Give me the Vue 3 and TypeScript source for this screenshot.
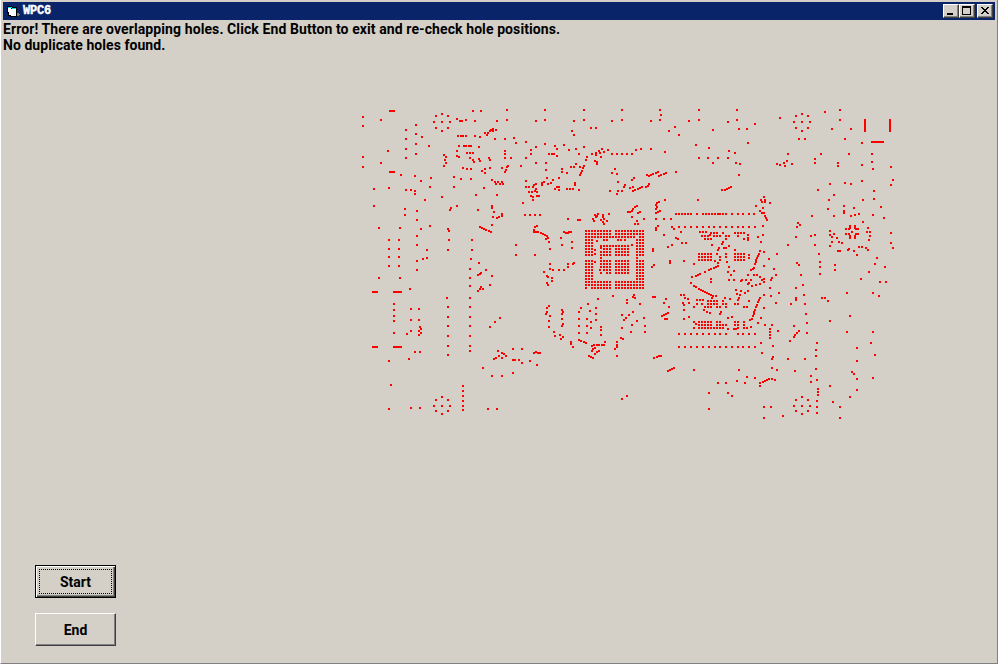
<script setup lang="ts">
interface Sheet {
  x: number
  y: number
  holes: string
}

// Hole centres, in thirds of a pixel from each sheet's origin.
const sheets: Sheet[] = [
  {
    x: 350, y: 100,
    holes: `39,51 39,78 93,60 120,33 126,33 132,33 369,33 393,33 276,42 258,48 294,48 252,66 276,66 300,66 258,84 294,84 276,93
    321,57 330,63 336,63 348,60 375,63 198,75 198,102 216,111 168,90 168,117 168,147 168,174 198,132 198,162 237,138 114,153
    39,171 39,201 93,189 120,216 126,216 132,216 153,225 195,228 213,243 243,234 240,261 168,270 183,270 195,273 195,282
    117,264 72,267 72,318 225,300 276,291 165,327 165,345 201,333 201,360 240,378 213,387 87,384 150,384 117,420 147,420
    117,447 147,447 117,471 147,471 201,408 201,435 231,450 231,474 219,477 324,108 333,108 339,108 348,108 375,108 390,111
    405,99 414,99 411,105 420,93 327,138 342,138 348,138 357,138 363,138 387,141 321,153 351,159 360,159 369,159 282,165
    288,171 321,168 327,171 285,180 288,189 282,198 360,174 369,180 372,186 387,177 390,183 417,174 420,180 339,204 351,207
    363,207 396,213 405,207 405,219 420,204 312,231 333,237 363,237 312,261 402,264 378,285 303,324 300,330 321,318 384,330
    294,387 297,393 390,381 396,384 402,387 408,390 417,393 297,420 366,420 294,450 366,450 363,477`,
  },
  {
    x: 490, y: 100,
    holes: `51,30 165,30 282,30 396,30 51,60 165,60 282,60 396,60 21,63 138,63 252,63 366,63 303,84 318,84 246,93 252,105
    3,90 9,87 9,93 18,90 15,117 45,117 72,114 78,129 108,126 165,132 138,141 195,138 222,135 201,147 237,150 258,147 282,141
    45,153 45,162 45,174 63,174 123,150 123,162 108,174 177,162 186,162 192,162 201,168 267,162 291,171 288,180 306,162
    318,159 318,165 327,153 330,159 336,147 342,156 354,150 333,171 366,162 381,162 396,162 411,162 315,183 321,186 321,192
    0,180 0,204 36,204 54,198 51,201 48,210 45,216 93,198 138,189 168,189 168,210 216,207 216,216 231,219 243,201 252,201
    258,192 270,201 282,198 279,204 276,213 273,219 270,225 375,207 366,219 381,222 6,240 15,246 24,246 36,246 18,252 30,252
    39,252 108,243 171,234 189,240 207,234 162,246 156,249 156,255 174,252 183,249 138,252 132,255 129,261 108,261 117,261
    138,267 135,273 126,276 117,276 141,276 123,288 129,291 141,288 147,288 129,300 195,267 201,261 207,261 207,270 231,267
    240,267 249,267 267,270 255,249 255,255 384,246 405,255 402,261 420,264 360,273 384,273 396,273 381,282 21,285 99,309
    6,318 6,324 12,336 9,351 21,354 27,351 36,342 36,348 6,375 105,345 120,345 135,345 150,345 234,357 264,360 270,360
    309,357 312,363 315,345 318,351 321,348 324,342 339,345 339,351 357,342 333,360 342,357 339,366 342,372 351,363 414,336
    420,336 3,396 135,381 141,378 132,390 132,396 138,396 144,396 153,399 159,402 165,405 171,408 174,414 168,417 177,426
    180,447 222,396 228,399 237,396 234,399 243,396 213,414 216,435 246,426 246,444 78,435 78,465 135,465
    288,393 297,393 306,393 315,393 324,393 333,393 342,393 351,393 360,393 378,393 387,393 396,393 405,393 414,393
    288,402 297,402 306,402 315,402 324,402 333,402 342,402 351,402 360,402 378,402 387,402 396,402 405,402 414,402
    288,411 297,411 306,411 315,411 324,411 333,411 342,411 351,411 360,411 369,411 378,411 387,411 396,411 405,411 414,411
    288,420 297,420 306,420 321,423 342,420 351,420 384,420 393,420 405,420 288,429 297,429 306,429
    288,438 297,438 306,438 333,438 342,438 351,438 360,438 369,438 378,438 387,438 396,438 405,438 414,438
    288,447 297,447 306,447 333,444 342,447 351,447 360,447 378,447 387,447 396,447 405,447 414,447 315,450
    288,456 297,456 306,456 333,456 342,456 351,456 360,456 378,456 387,456 396,456 405,456 414,456
    288,465 297,465 306,465 315,462 333,465 342,465 351,465 360,465 378,465 387,465 396,465 405,465 414,465 333,474`,
  },
  {
    x: 630, y: 100,
    holes: `90,30 207,30 321,30 93,45 90,60 207,60 321,60 63,63 177,63 294,66 375,72 135,81 117,93 147,105 249,90 327,87
    351,87 354,129 198,135 237,144 297,153 315,159 105,156 63,147 33,147 18,150 6,162 207,174 234,174 264,174 294,174 249,189
    318,189 330,192 327,225 138,216 108,219 102,222 93,225 87,228 84,216 78,219 69,222 63,225 57,228 51,225 12,234 6,240
    57,252 54,258 48,261 36,261 30,264 24,267 15,270 9,273 9,261 0,264 303,261 297,264 291,267 285,270 276,270 105,300
    204,300 87,306 81,309 78,315 81,321 78,327 90,333 84,336 78,339 21,318 15,321 9,327 6,333 0,336 30,336 24,339 6,351
    42,357 21,363 15,372 24,372 78,357 102,357 123,357 138,342 147,342 156,342 165,342 174,342 183,342 201,342 219,342
    228,342 237,342 246,342 255,342 264,342 270,342 279,342 288,342 306,342 324,342 339,342 357,342 372,342 402,291 393,300
    405,300 396,306 405,306 420,309 378,318 399,324 390,333 396,339 402,339 405,348 408,354 411,360 399,378 126,381 132,387
    147,381 165,381 183,381 201,381 219,381 237,381 252,381 270,381 288,381 306,381 324,381 339,381 357,381 375,381 84,378
    78,384 78,390 153,396 102,405 138,414 144,417 156,429 168,429 126,435 114,441 69,447 69,453 6,435 399,405 384,411 393,426
    210,396 219,396 228,396 243,399 252,399 261,399 279,399 315,399 324,399 333,399 342,399 216,408 225,408 234,408 240,405
    252,408 261,408 270,408 288,408 297,408 225,417 234,417 243,417 288,417 324,408 342,417 354,405 354,414 354,420 279,426
    276,432 246,435 267,444 264,450 282,444 288,444 297,438 315,450 390,453 402,456 387,462 384,468 381,474 378,480 417,477
    207,462 216,462 225,462 234,462 243,462 261,462 288,462 315,462 324,462 333,462 342,462
    207,471 216,471 225,471 234,471 243,471 270,471 288,471 315,471 324,471 333,471 342,471 357,465 357,474
    3,393 12,393 21,393 30,393 39,393 3,402 12,402 21,402 30,402 39,402 3,411 12,411 30,411 39,411
    21,420 30,420 39,420 21,429 30,429 39,429 30,438 39,438 21,438 21,447 30,447 39,447 21,456 30,456 39,456
    21,465 30,465 39,465 21,474`,
  },
  {
    x: 770, y: 100,
    holes: `30,54 78,48 96,42 114,48 72,66 96,66 120,66 78,84 114,84 96,93 87,117 105,117 165,36 210,30 210,60 186,87 243,87
    225,117 276,129 54,162 153,162 237,162 306,162 306,186 309,207 363,201 276,195 204,189 204,198 135,177 135,189 66,192
    51,183 42,189 45,198 30,195 21,192 369,240 363,255 276,243 225,249 243,252 180,252 144,270 192,285 177,300 312,273
    312,297 279,300 333,321 0,309 222,318 222,333 222,339 252,324 174,327 126,348 192,348 243,348 255,345 267,342 309,345
    342,354 279,366 294,384 84,369 90,375 81,381 78,411 54,435 21,462 123,408 135,405 135,435 147,462 180,393 192,402 180,405
    186,411 201,414 186,426 207,426 216,429 180,438 204,453 210,453 240,378 255,378 240,384 255,384 228,387 237,387 258,387
    264,387 246,396 228,402 237,402 258,402 264,402 240,408 255,408 240,414 255,414 291,396 300,396 300,408 297,420 237,447
    234,450 252,453 261,465 267,441 276,441 288,444 294,450 363,399 363,429 369,444 321,474
    285,60 285,66 285,72 285,78 285,84 285,90 285,93 360,60 360,66 360,72 360,78 360,84 360,90 360,93
    306,126 312,126 318,126 324,126 330,126 336,126 339,126`,
  },
  {
    x: 350, y: 260,
    holes: `117,18 147,18 201,3 201,30 87,54 150,54 180,87 69,96 75,96 81,96 132,96 138,96 144,96 150,96 153,96 132,132
    132,150 132,168 132,183 132,219 183,147 207,147 183,180 207,180 210,201 213,207 207,213 213,219 207,225 183,213 171,222
    69,261 75,261 81,261 132,261 138,261 144,261 150,261 153,261 195,276 210,276 177,297 117,303 123,375 117,447 183,444
    210,444 276,411 258,420 294,420 252,438 276,438 300,438 258,453 294,453 276,462 339,378 339,393 339,408 339,423 339,438
    339,450 414,447 399,324 291,114 294,141 294,171 294,198 294,228 294,258 294,285 360,27 360,54 360,78 360,114 360,141
    360,171 360,198 360,228 360,258 360,273 387,9 408,30 393,39 390,42 384,45 393,81 390,87 399,87 384,93 420,75 420,201`,
  },
  {
    x: 490, y: 260,
    holes: `6,48 30,174 15,186 180,12 180,27 189,30 207,30 222,30 234,12 234,21 249,12 252,9 162,36 171,48 174,51 186,54 186,63
    171,69 174,75 324,117 369,108 294,132 411,120 411,129 177,138 171,144 171,156 168,162 180,168 177,183 177,201 216,150
    219,156 216,162 216,177 219,192 216,198 192,216 195,228 210,225 219,231 213,237 273,144 267,156 267,177 267,198 267,219
    267,240 273,243 282,246 288,249 300,153 318,144 318,162 318,180 291,177 303,186 291,198 303,204 291,219 333,201 333,210
    333,225 396,165 417,165 408,174 402,180 396,204 393,234 399,237 243,246 243,252 249,261 306,258 312,255 321,255 327,255
    336,255 342,255 345,246 315,264 309,267 306,273 327,273 321,276 315,282 297,288 303,291 309,294 381,246 381,255 381,261
    375,267 381,288 24,273 36,279 42,282 48,288 27,288 36,294 18,294 12,297 69,267 96,267 132,279 138,276 144,279 150,279
    69,300 75,300 87,300 96,309 120,303 141,315 69,339 36,348 6,348 21,447 396,417 411,408
    288,3 297,3 306,3 315,6 333,3 342,3 351,3 360,3 378,3 387,3 396,3 405,3 414,3
    288,12 297,12 306,12 333,12 342,12 351,12 360,12 378,12 387,12 396,12 405,12 414,12
    288,21 297,21 306,21 333,21 342,21 351,21 360,21 378,21 387,21 396,21 405,21 414,21
    288,30 297,30 306,30 330,30 342,30 351,30 360,30 378,30 387,30 396,30 405,30 414,30
    288,39 297,39 306,39 333,39 351,39 360,39 378,39 387,39 396,39 405,39 414,39 288,48 297,48 306,48 288,57 297,57 306,57
    288,66 297,66 306,66 315,66 324,66 333,66 342,66 351,66 360,66 378,66 387,66 396,66 405,66 414,66
    288,75 297,75 306,75 315,75 324,75 333,75 342,75 351,75 360,75 378,75 387,75 396,75 405,75 414,75
    288,84 306,84 315,84 324,84 333,84 342,84 351,84 360,84 378,84 387,84 396,84 405,84 414,84`,
  },
  {
    x: 630, y: 260,
    holes: `21,3 30,3 39,3 21,12 30,12 39,12 21,21 30,21 39,21 21,30 30,30 39,30 21,39 30,39 39,39 21,48 30,48 39,48
    21,57 30,57 39,57 3,66 12,66 21,66 30,66 39,66 3,75 12,75 21,75 30,75 39,75 3,84 12,84 21,84 30,84 39,84
    72,15 66,21 120,3 120,9 162,3 192,12 207,0 216,0 225,0 234,0 243,0 255,3 264,9 270,0 291,6 315,0 324,0 333,0 342,0
    297,21 294,36 303,45 312,33 297,60 312,60 264,18 258,21 252,24 243,27 237,30 225,36 210,42 204,45 198,48 186,51 183,69
    192,78 198,81 207,87 213,90 219,93 225,96 231,99 237,102 243,105 249,108 258,108 243,57 243,66 378,6 375,12 372,24 369,27
    363,30 402,18 354,45 372,45 381,45 390,51 402,57 396,60 402,66 390,72 378,75 366,78 336,60 333,63 348,60 363,60 357,69
    354,72 354,93 345,99 318,90 321,102 333,93 330,105 300,117 285,114 246,114 153,105 162,105 165,114 174,117 177,129
    162,135 159,129 69,111 75,111 12,105 9,111 15,114 30,132 9,156 21,183 6,195 3,216 42,174 45,198 45,216 108,117 102,129
    117,141 114,159 108,162 102,165 96,168 105,177 111,177 162,150 162,177 177,171 192,141 201,120 210,120 219,120 201,132
    216,132 234,123 243,123 252,123 261,123 279,123 234,132 243,132 252,132 261,132 279,132 288,132 225,141 234,141 243,141
    261,141 270,141 288,141 327,114 324,120 315,132 324,132 342,141 351,141 357,123 402,105 390,114 387,120 384,126 381,135
    378,141 375,150 372,156 372,162 369,168 366,177 360,180 402,144 393,174 384,189 405,195 222,150 231,156 240,159 273,156
    270,162 294,174 306,171 192,186 198,192 207,186 216,186 225,186 234,186 243,186 261,186 270,186 315,186 324,186 342,186
    207,195 216,195 225,195 234,195 243,195 261,195 270,195 279,195 288,195 315,195 324,195 342,195
    192,204 207,204 216,204 225,204 234,204 243,204 252,204 261,204 270,204 279,204 294,207 312,207 318,207 324,204 342,204
    351,204 363,201 420,207 420,216 420,225 420,234
    147,222 165,222 183,222 201,222 219,222 237,222 255,222 270,222 288,222 324,222 339,222 357,222 375,222
    147,261 165,261 183,261 201,261 219,261 237,261 255,261 270,261 288,261 306,261 324,261 339,261 357,261 375,261
    393,249 396,279 93,288 87,288 81,291 72,294 132,324 126,327 120,330 114,333 192,330 327,330 264,369 288,369 321,363
    345,369 351,351 375,354 390,369 390,378 399,366 405,363 411,360 417,357 237,399 294,399 306,408 237,447 402,441 402,474`,
  },
  {
    x: 770, y: 260,
    holes: `12,27 18,45 6,54 3,60 0,84 3,108 27,99 18,129 81,9 87,15 93,45 99,75 78,84 102,105 78,114 78,120 63,132 105,132
    150,6 150,21 150,42 195,15 195,30 156,114 165,114 174,123 108,162 111,189 111,219 72,198 87,213 81,219 75,225 72,231
    60,243 24,213 6,195 9,258 9,291 6,297 6,324 21,330 6,357 15,360 54,297 105,297 75,333 123,348 123,366 141,249 138,270
    138,288 138,327 141,360 144,387 144,396 144,405 141,423 141,441 141,459 96,411 78,420 114,420 72,438 96,438 120,438
    78,453 114,453 96,462 39,468 3,441 180,183 180,378 189,426 210,441 210,474 231,99 240,168 231,216 261,264 261,303
    246,336 252,342 261,357 261,390 240,411 309,99 309,216 303,249 315,285 309,354 315,12 345,21 297,36 273,57 330,66 348,66
    327,108`,
  },
]

const BOARD_X = 351
const BOARD_Y = 101

// Each hole is a 2px square around its centre.
const holePath: string = sheets
  .flatMap((sheet) =>
    sheet.holes.trim().split(/\s+/).map((pair) => {
      const [x, y] = pair.split(',').map(Number)
      const left = sheet.x + Math.round(x / 3) - 1 - BOARD_X
      const top = sheet.y + Math.round(y / 3) - 1 - BOARD_Y
      return `M${left} ${top}h2v2h-2z`
    }),
  )
  .join('')
</script>

<template>
  <main class="window">
    <header class="titlebar">
      <svg class="app-icon" width="14" height="12" viewBox="0 -1 14 12" shape-rendering="crispEdges">
        <path d="M0 0h5v1h5v10H3v-1H1V7H0z" fill="#000" />
        <path d="M1 1h4v1h4v1H5V2H1z" fill="#00e0e8" />
        <path d="M1 2h3v1h5v7H4V9H2V6H1z" fill="#fff" />
        <path d="M10 7h2v1h1v1h-1v1h-2z" fill="#808080" />
      </svg>
      <span class="title">WPC6</span>
      <div class="controls">
        <button class="control" aria-label="Minimize">
          <svg width="14" height="12" viewBox="0 0 14 12" shape-rendering="crispEdges"><path d="M3 8h6v2H3z" /></svg>
        </button>
        <button class="control" aria-label="Maximize">
          <svg width="14" height="12" viewBox="0 0 14 12" shape-rendering="crispEdges"><path fill-rule="evenodd" d="M2 1h9v9H2zM3 3v6h7V3z" /></svg>
        </button>
        <button class="control close" aria-label="Close">
          <svg width="14" height="12" viewBox="0 0 14 12" shape-rendering="crispEdges"><path d="M3 2h2v1h1v1h2V3h1V2h2v1h-1v1H9v1H8v1h1v1h1v1h1v1H9V8H8V7H6v1H5v1H3V8h1V7h1V6h1V5H5V4H4V3H3z" /></svg>
        </button>
      </div>
    </header>
    <section class="messages">
      <p class="error">Error! There are overlapping holes. Click End Button to exit and re-check hole positions.</p>
      <p class="result">No duplicate holes found.</p>
    </section>
    <svg class="holes" width="550" height="330" viewBox="0 0 550 330" shape-rendering="crispEdges">
      <path :d="holePath" fill="#f00" />
    </svg>
    <section class="actions">
      <button class="command default"><span class="focus">Start</span></button>
      <button class="command">End</button>
    </section>
  </main>
</template>

<style>
body {
  margin: 0;
  background: #d4d0c8;
}
</style>

<style scoped>
.window {
  box-sizing: border-box;
  width: 998px;
  height: 664px;
  padding: 2px 2px 0;
  border-left: 1px solid #fff;
  border-right: 1px solid #808080;
  border-bottom: 1px solid #808080;
  background: #d4d0c8;
  display: flex;
  flex-direction: column;
  overflow: hidden;
  color: #000;
  font: bold 14px/16px Roboto, "Liberation Sans", sans-serif;
}
.titlebar {
  height: 18px;
  flex: none;
  display: flex;
  align-items: center;
  padding: 0 2px 0 4px;
  background: #0a246a;
}
.app-icon {
  display: block;
}
.title {
  margin-left: 2px;
  color: #fff;
  font: bold 12px/18px "Liberation Mono", monospace;
  letter-spacing: -0.2px;
  -webkit-text-stroke: 0.4px #fff;
}
.controls {
  display: flex;
  margin-left: auto;
}
.control {
  box-sizing: border-box;
  width: 16px;
  height: 14px;
  padding: 0;
  border: 1px solid;
  border-color: #fff #404040 #404040 #fff;
  background: #d4d0c8;
  box-shadow: inset -1px -1px #808080;
}
.control svg {
  display: block;
}
.close {
  margin-left: 2px;
}
.messages {
  height: 80px;
  flex: none;
  padding-top: 1px;
  white-space: nowrap;
}
.messages p {
  margin: 0;
}
.error {
  letter-spacing: 0.095px;
}
.result {
  letter-spacing: 0.05px;
}
.holes {
  display: block;
  flex: none;
  margin-left: 348px;
}
.actions {
  display: flex;
  flex-direction: column;
  gap: 15px;
  margin: auto 0 17px 32px;
}
.command {
  box-sizing: border-box;
  width: 81px;
  height: 33px;
  padding: 0;
  border: 1px solid;
  border-color: #fff #404040 #404040 #fff;
  background: #d4d0c8;
  box-shadow: inset -1px -1px #808080;
  color: #000;
  font: inherit;
}
.default {
  padding: 3px;
  border-color: #000;
  box-shadow: inset 1px 1px #fff, inset -1px -1px #404040, inset -2px -2px #808080;
}
.focus {
  box-sizing: border-box;
  display: block;
  height: 25px;
  border: 1px dotted #000;
  line-height: 24px;
}
</style>
